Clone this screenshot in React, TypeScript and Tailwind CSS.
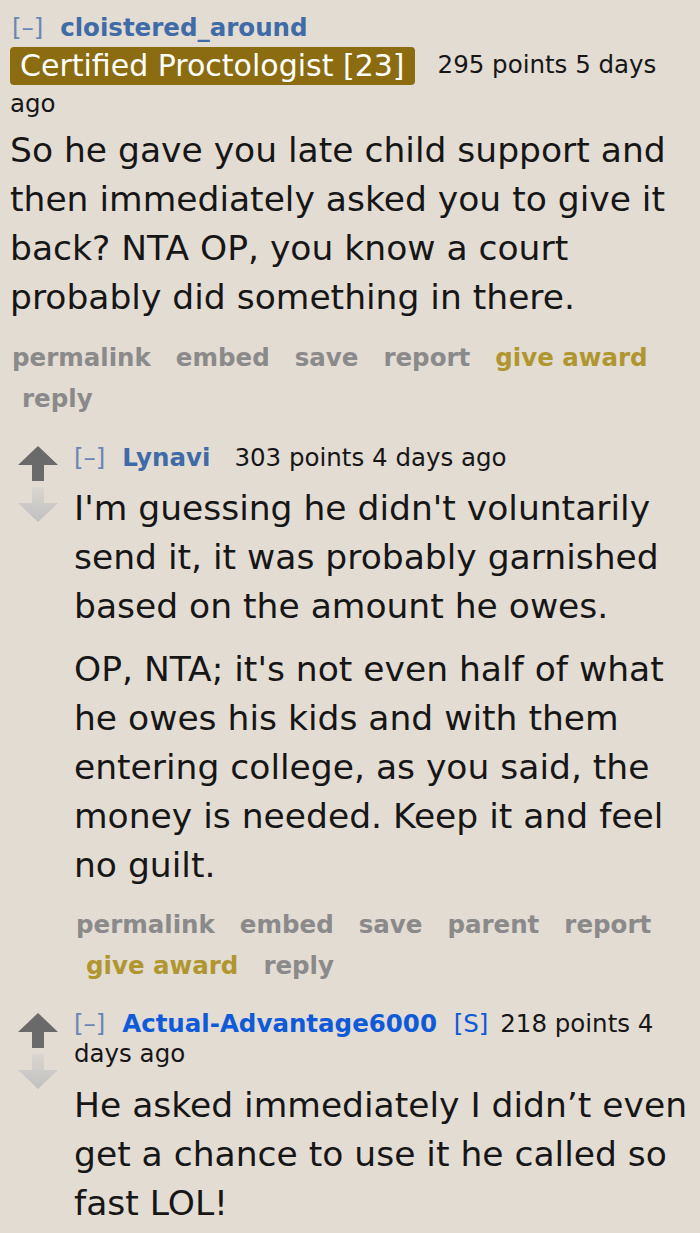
import React from "react";

const font = "font-['DejaVu_Sans','Verdana',sans-serif]";

const Arrows: React.FC = () => (
  <div className="flex w-[74px] shrink-0 flex-col items-start pl-[18px]">
    <svg width="40" height="35" viewBox="0 0 40 35">
      <polygon points="20,0 40,19 26,19 26,35 14,35 14,19 0,19" fill="#6a6a6a" />
    </svg>
    <svg width="40" height="35" viewBox="0 0 40 35" className="mt-[6px]">
      <defs>
        <linearGradient id="dg" x1="0" y1="0" x2="0" y2="1">
          <stop offset="0" stopColor="#dad6d0" />
          <stop offset="1" stopColor="#c0c0c0" />
        </linearGradient>
      </defs>
      <polygon points="14,0 26,0 26,16 40,16 20,35 0,16 14,16" fill="url(#dg)" />
    </svg>
  </div>
);

const Buttons: React.FC<{ items: string[] }> = ({ items }) => (
  <ul className="flex flex-wrap pl-[2px] text-[24.5px] font-bold leading-[41px]">
    {items.map((it, i) => (
      <li
        key={it}
        className={`${i === 0 ? "" : "pl-[10px]"} pr-[15px] ${
          it === "give award" ? "text-[#b0962f]" : "text-[#8a8a8a]"
        }`}
      >
        {it}
      </li>
    ))}
  </ul>
);

const Expand: React.FC = () => <span className="mr-[9px] text-[#6a86b6]">[–]</span>;

export default function App() {
  return (
    <div className={`min-h-screen bg-[#e3dcd3] ${font} text-[#161616]`}>
      {/* top comment */}
      <div className="pl-[10px] pr-[8px] pt-[9px]">
        <div className="text-[24.5px] leading-[37px]">
          <span className="pl-[2px]">
            <Expand />
          </span>{" "}
          <span className="font-bold text-[#3f6ba6]">cloistered_around</span>
          <br />
          <span className="mr-[23px] inline-block h-[38px] rounded-[4px] bg-[#8b6c10] px-[10px] align-middle text-[30px] leading-[38px] text-white">
            Certified Proctologist [23]
          </span>
          295 points 5 days ago
        </div>
        <div className="mt-[4px] text-[34.5px] leading-[49px]">
          <p>
            So he gave you late child support and then immediately asked you to give it back? NTA OP, you know a court
            probably did something in there.
          </p>
        </div>
        <div className="mt-[15px]">
          <Buttons items={["permalink", "embed", "save", "report", "give award", "reply"]} />
        </div>
      </div>

      {/* reply 1 */}
      <div className="mt-[24px] flex">
        <div className="pt-[3px]">
          <Arrows />
        </div>
        <div className="pr-[8px]">
          <div className="text-[24.5px] leading-[30px]">
            <Expand />{" "}
            <span className="font-bold text-[#3f6ba6]">Lynavi</span>
            <span className="ml-[24px]">303 points 4 days ago</span>
          </div>
          <div className="mt-[11px] text-[34.5px] leading-[49px]">
            <p>I'm guessing he didn't voluntarily send it, it was probably garnished based on the amount he owes.</p>
            <p className="mt-[14px]">
              OP, NTA; it's not even half of what he owes his kids and with them entering college, as you said, the
              money is needed. Keep it and feel no guilt.
            </p>
          </div>
          <div className="mt-[14px]">
            <Buttons items={["permalink", "embed", "save", "parent", "report", "give award", "reply"]} />
          </div>
        </div>
      </div>

      {/* reply 2 */}
      <div className="mt-[23px] flex">
        <div className="pt-[4px]">
          <Arrows />
        </div>
        <div>
          <div className="text-[24.5px] leading-[30px]">
            <Expand />{" "}
            <span className="font-bold text-[#0f5ad8]">Actual-Advantage6000</span>{" "}
            <span className="ml-[9px] text-[#0f5ad8]">[S]</span>
            <span className="ml-[4px]"> 218 points 4 days ago</span>
          </div>
          <div className="mt-[12px] text-[34.5px] leading-[49px]">
            <p>He asked immediately I didn’t even get a chance to use it he called so fast LOL!</p>
          </div>
        </div>
      </div>
    </div>
  );
}
